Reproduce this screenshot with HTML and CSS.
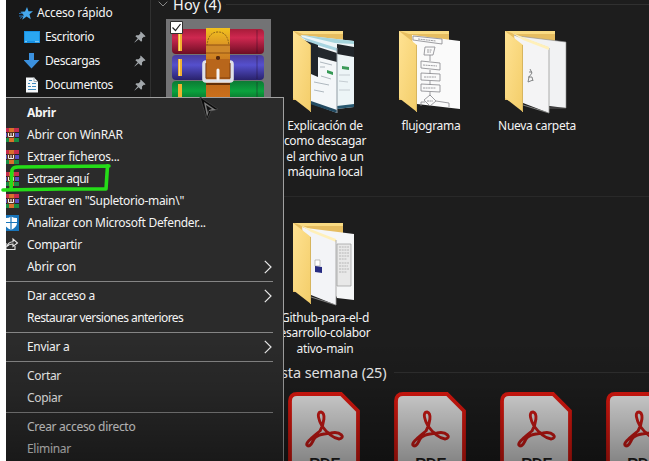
FILE: index.html
```
<!DOCTYPE html>
<html lang="es">
<head>
<meta charset="utf-8">
<title>Explorador de archivos</title>
<link rel="stylesheet" href="styles.css">
</head>
<body>
<svg class="defs" aria-hidden="true">
  <linearGradient id="fold" x1="0" x2="1" y2="1"><stop offset="0" stop-color="#ffe292"/><stop offset="1" stop-color="#f3cd69"/></linearGradient>
  <linearGradient id="red" x2="0" y2="1"><stop offset="0" stop-color="#a81c3a"/><stop offset=".35" stop-color="#cf2850"/><stop offset="1" stop-color="#6d0d24"/></linearGradient>
  <linearGradient id="blue" x2="0" y2="1"><stop offset="0" stop-color="#4a3b9c"/><stop offset=".4" stop-color="#5550cd"/><stop offset="1" stop-color="#29226c"/></linearGradient>
  <linearGradient id="green" x2="0" y2="1"><stop offset="0" stop-color="#0c7a34"/><stop offset=".4" stop-color="#0ba33e"/><stop offset="1" stop-color="#07501f"/></linearGradient>
  <linearGradient id="belt" x2="0" y2="1"><stop offset="0" stop-color="#f2c21e"/><stop offset=".25" stop-color="#d98f25"/><stop offset=".6" stop-color="#b9651a"/><stop offset="1" stop-color="#d3741c"/></linearGradient>
  <symbol id="pin" viewBox="0 0 12 12"><path d="M6.700.400 11.600 5.300l-1.200.6-.6-.2-1.800 1.900.1 2.200-1 .9L4.600 8.300.7 11.500l-.3-.3L3.700 7.300 1.400 5.200l.9-1 2.300.1L6.400 2.500 6.200 1.500z" fill="#a2a7ab"/></symbol>
  <symbol id="rar" viewBox="0 0 13 14"><path fill="#c52c4c" d="M0 0h13v4H0z"/><path fill="#554fc0" d="M0 5h13v4H0z"/><path fill="#188c42" d="M0 10h13v4H0z"/><path fill="#222" d="M0 4h13v1H0zM0 9h13v1H0z"/><path fill="#d9702b" d="M3 0h5v14H3z"/><path fill="#5b3421" d="M1 4h8v6H1z"/><path d="M2.500 5v3.500h5V5M5 5v3.500" fill="none" stroke="#f3eeee"/></symbol>
  <symbol id="chev" viewBox="0 0 8 14"><path d="M.8.8 7 7 .8 13.200" fill="none" stroke="#e8e8e8" stroke-width="1.200"/></symbol>
  <symbol id="pdf" viewBox="0 0 72 100"><path d="M9 2H53L70 19V98H2V9Q2 2 9 2Z" fill="#e6e6e6" stroke="#e0180f" stroke-width="3.800"/><path d="M20 54C15 52 26 44 32 39 36 32 38 21 33 20 28 20 31 29 34 34 39 41 45 46 51 47 58 46 53 39 43 41 34 42 27 43 25 49 23 53 21 55 19 53" fill="none" stroke="#d11a16" stroke-width="2.900" stroke-linecap="round" stroke-linejoin="round"/></symbol>
  <symbol id="back" viewBox="0 0 62 84"><path d="M0 1H50V70H0z" fill="#e6bd60"/><path d="M1 1H50V4H10z" fill="#f9db83"/></symbol>
  <symbol id="front" viewBox="0 0 62 84"><path d="M0 1 18 15V82L0 68z" fill="url(#fold)"/><path d="M17.500 15V82" stroke="#d7b55e"/></symbol>
</svg>

<div class="window">
  <nav class="side">
    <div class="quick"><svg width="14" height="13" viewBox="0 0 14 13"><path d="M8 0 9.500 4.300 14 4.300 10.500 7.200 11.800 12.300 7.600 9.500 3.200 12.800 4.600 7.900 1.500 4.800 6 4.500z" fill="#46a9ee"/><path d="M0 6.500 4 6M0 9h4M1 11.500 4 9" stroke="#2876ba"/></svg><span>Acceso rápido</span></div>
    <div class="place"><svg width="16" height="12" viewBox="0 0 16 12"><path d="M0 0h16v12H0z" fill="#1690e4"/><path d="M1 1h14v9H1z" fill="#2aa6f1"/><path d="M1 10.700h14" stroke="#92d2f5" stroke-dasharray="2 8 4"/></svg><span>Escritorio</span><svg class="pin"><use href="#pin"/></svg></div>
    <div class="place"><svg width="16" height="16" viewBox="0 0 16 16"><path d="M5 0h5v7h5.500L7.500 15.500-.5 7H5z" fill="#3b91df"/></svg><span>Descargas</span><svg class="pin"><use href="#pin"/></svg></div>
    <div class="place"><svg width="16" height="16" viewBox="0 0 16 16"><path d="M2 .5h8l4 4v11H2z" fill="#f5f8fa"/><path d="M10 .5v4h4" fill="none" stroke="#a5adb4"/><path d="M4 6.500h2M8 6.500h4M4 9.500h3M8 9.500h4M4 12.500h8M5 3.500h3" stroke="#3f8bc0" stroke-width="1.200"/></svg><span>Documentos</span><svg class="pin"><use href="#pin"/></svg></div>
  </nav>
  <main class="files">
    <h2 class="group today"><svg width="10" height="6" viewBox="0 0 10 6"><path d="m.7.700 4.300 4.300L9.300.7" fill="none" stroke="#888"/></svg><span>Hoy (4)</span></h2>
    <div class="grid first">
      <div class="file selected">
        <svg class="archive" width="92" height="92" viewBox="0 0 92 92">
          <rect x="0" y="2" width="92" height="25" rx="4" fill="url(#red)"/><rect x="0" y="28" width="92" height="25" rx="4" fill="url(#blue)"/><rect x="0" y="54" width="92" height="25" rx="4" fill="url(#green)"/>
          <path d="M6 6h4v18H6zM6 32h4v17H6zM6 57h4v18H6z" fill="#f0b232"/><path d="M7 6h1v18H7zM7 32h1v17H7z" fill="#ffe27a"/>
          <path d="M85 3v23M85 29v23M85 55v23" stroke="#200a25" opacity=".4"/>
          <path d="M34 1h24v78H34z" fill="url(#belt)"/><path d="M35 19Q36 5 46 5T57 19" fill="none" stroke="#8e6216" stroke-dasharray="2 1"/><path d="M34 18h24v8H34z" fill="#cf882a"/><path d="M34 18h24M34 26h24" stroke="#905012"/>
          <circle cx="46" cy="31" r="2" fill="#54270e"/><rect x="32" y="35" width="28" height="19" rx="2" fill="none" stroke="#dfe1e8" stroke-width="3.600"/><path d="M34 32h24v19H34z" fill="#b8661b"/><circle cx="46" cy="31" r="2" fill="#54270e"/><path d="M34 36V51h24V36" fill="none" stroke="#82410f"/><path d="M46 43v9" stroke="#f4f4f6" stroke-width="3" stroke-linecap="round"/><path d="M34 57h24" stroke="#643009" stroke-width="2"/>
        </svg>
        <svg class="check" width="13" height="13" viewBox="0 0 13 13"><path d="M.5.500h12v12H.5z" fill="#fff" stroke="#303030"/><path d="m2.500 6.500 3 3 5-6.500" fill="none" stroke="#222" stroke-width="1.200"/></svg>
      </div>
      <div class="file">
        <svg class="folder" viewBox="0 0 62 84"><use href="#back"/><path d="M8 5 61 11V77L44 79z" fill="#edf5f7"/><path d="M8 5 61 11V14L42 13z" fill="#a5d5dd"/><path d="M44 14 61 17V27L44 24z" fill="#202529"/><path d="M49 36l7 1v3l-7-1z" fill="#3c9b5a"/><path d="M46 45h11M46 51l9 1M46 60h11" stroke="#c5cdd2"/><path d="M44 76 61 74V77L44 79z" fill="#285870"/><path d="M6 6 44 18V83L17 73z" fill="#f4f7f9"/><path d="M6 6 44 18V21L20 14z" fill="#a7d4e0"/><path d="M8 9 25 15V47L18 44V17z" fill="#20252b"/><path d="M25 17 44 23V32L25 27z" fill="#23282d"/><path d="M34 40l6 2v3l-6-2z" fill="#359955"/><path d="M27 32l12 3M27 37h5M28 46l10 3M21 52l15 3M21 60l10 2" stroke="#afb8bf"/><path d="M18 71 44 80V83L17 74z" fill="#234b62"/><path d="M44 18v65" stroke="#909ba3"/><use href="#front"/></svg>
        <span class="name">Explicación de<br>como descagar<br>el archivo a un<br>máquina local</span>
      </div>
      <div class="file">
        <svg class="folder" viewBox="0 0 62 84"><use href="#back"/><path d="M13 5 61 11V79L18 74z" fill="#fafafa"/><g fill="none" stroke="#85858a" stroke-width=".8"><path d="M14 6l29 3v5L14 10zM26 17h10l-2 8h-9zM22 31l19 2v7l-19-2zM22 43l19 1v7l-19-1zM22 54l19 1v7l-19-1zM31 65l6 6-6 5-6-6zM31 25v6M31 40v4M31 51v4M31 62v4M37 71l13 2v4M22 76v-4h4"/><path d="M19 9l18 2M28 20h5M28 22h4M24 35l14 1M25 47h12M24 58h13M28 71h6" stroke-dasharray="2 .6"/></g><use href="#front"/></svg>
        <span class="name">flujograma</span>
      </div>
      <div class="file">
        <svg class="folder" viewBox="0 0 62 84"><use href="#back"/><path d="M13 6 61 12V78L44 76z" fill="#f1f2f3"/><path d="M13 6 61 12V78H44" fill="none" stroke="#8a8c8c" stroke-width=".6"/><path d="M9 5 44 18V83L18 73z" fill="#f4f4f5"/><path d="M9 5 44 18V83L18 75" fill="none" stroke="#999b98" stroke-width=".8"/><path d="m7 3 37 14v3L18 10z" fill="#fff0b9"/><path d="m25 39 2 4-3 4-1 5 5-2M23 47h4l1 4M24 42h3" fill="none" stroke="#77797a" stroke-width=".9"/><use href="#front"/></svg>
        <span class="name">Nueva carpeta</span>
      </div>
      <div class="rule"></div>
      <div class="file second">
        <svg class="folder" viewBox="0 0 62 84"><use href="#back"/><path d="M13 6 61 12V78L44 76z" fill="#f5f6f7"/><path d="M44 22h14v42H44z" fill="#e8e8e8" stroke="#999" stroke-width=".7"/><path d="M46 25h10M46 28h10M46 31h10M46 34h10M46 37h8M46 41h10M46 44h9M46 47h10M46 50h8" stroke="#aaa" stroke-width=".8" stroke-dasharray="2 .7"/><path d="M9 5 43 18V83L18 73z" fill="#f3f4f7"/><path d="m7 3 36 14v3L18 10z" fill="#fff0b9"/><path d="M43 18v65L18 75" fill="none" stroke="#999" stroke-width=".8"/><path d="M22 38h5v6h-5z" fill="#fff" stroke="#999" stroke-width=".6"/><path d="m22 44 7 1v6l-7-1z" fill="#262b82"/><use href="#front"/></svg>
        <span class="name">Github-para-el-d<br>esarrollo-colabor<br>ativo-main</span>
      </div>
    </div>
    <h2 class="group week"><span>Esta semana (25)</span></h2>
    <div class="grid docs">
      <div class="doc"><svg><use href="#pdf"/></svg><b>PDF</b></div>
      <div class="doc"><svg><use href="#pdf"/></svg><b>PDF</b></div>
      <div class="doc"><svg><use href="#pdf"/></svg><b>PDF</b></div>
      <div class="doc"><svg><use href="#pdf"/></svg><b>PDF</b></div>
    </div>
  </main>

  <div class="menu" role="menu">
    <div class="item bold"><i></i><span>Abrir</span></div>
    <div class="item wide"><i><svg class="rar"><use href="#rar"/></svg></i><span>Abrir con WinRAR</span></div>
    <div class="item"><i><svg class="rar"><use href="#rar"/></svg></i><span>Extraer ficheros...</span></div>
    <div class="item tight"><i><svg class="rar"><use href="#rar"/></svg></i><span>Extraer aquí</span></div>
    <div class="item"><i><svg class="rar"><use href="#rar"/></svg></i><span>Extraer en "Supletorio-main\"</span></div>
    <div class="item"><i><svg width="13" height="16" viewBox="0 0 13 16"><path fill="#1875bb" d="M0 0h13v16H0z"/><path fill="#fff" d="M0 3q3 0 5-1.500Q8 3 11 3v5q0 4-6 7-3-1.500-5-3.500z"/><path d="M5 1v14M0 7.500h11" stroke="#1875bb" stroke-width="1.200"/></svg></i><span>Analizar con Microsoft Defender...</span></div>
    <div class="item"><i><svg width="13" height="16" viewBox="0 0 13 16"><path d="M0 6v6.500h9V9M1 9.500Q2 5 7 4.800V2l4.500 4L7 9.500V7Q3 7 1 9.500z" fill="none" stroke="#e6e6e6" stroke-width="1.100"/></svg></i><span>Compartir</span></div>
    <div class="item"><i></i><span>Abrir con</span><svg class="chev"><use href="#chev"/></svg></div>
    <hr>
    <div class="item"><i></i><span>Dar acceso a</span><svg class="chev"><use href="#chev"/></svg></div>
    <div class="item tight"><i></i><span>Restaurar versiones anteriores</span></div>
    <hr>
    <div class="item"><i></i><span>Enviar a</span><svg class="chev"><use href="#chev"/></svg></div>
    <hr>
    <div class="item"><i></i><span>Cortar</span></div>
    <div class="item"><i></i><span>Copiar</span></div>
    <hr>
    <div class="item"><i></i><span>Crear acceso directo</span></div>
    <div class="item"><i></i><span>Eliminar</span></div>
  </div>
  <div class="shade"></div>
</div>
<svg class="mark" width="112" height="34" viewBox="0 0 112 34"><path d="M11 28 12 9Q13 6 18 6L109 5M107.500 5 106 28 60 28 3 29" fill="none" stroke="#25dc18" stroke-width="3.600" stroke-linecap="round" stroke-linejoin="round"/></svg>
<svg class="cursor" width="22" height="26" viewBox="0 0 22 26"><path d="M1 0 19 12 12 14 8 23z" fill="#0b0b0b" stroke="#3c3c3c"/><path d="m5 5 12 8-7 1-2 6z" fill="#7a7a7a"/><path d="m7 8 6 4-3 1-1 3z" fill="#111"/></svg>
</body>
</html>
```
FILE: styles.css
```
* { box-sizing: border-box; }
body { margin: 0; width: 649px; height: 461px; overflow: hidden; position: relative; background: #fff; color: #f4f4f4; font: 12px/15.3px "Noto Sans", "Open Sans", sans-serif; letter-spacing: -.3px; }
svg { display: block; flex: none; }
.defs { position: absolute; width: 0; height: 0; }
.window { position: relative; margin-left: 6px; height: 461px; display: grid; grid-template-columns: 145px 1fr; background: #1d1d1d; overflow: hidden; }
.side { background: #181818; border-right: 1px solid #303030; padding-top: 1px; }
.quick, .place { display: flex; align-items: center; height: 24px; }
.quick { padding-left: 13px; gap: 4px; letter-spacing: -.25px; }
.place { padding: 0 4px 0 18px; }
.place span { margin-left: 5px; letter-spacing: -.4px; }
.pin { width: 12px; height: 12px; margin-left: auto; }
.files { overflow: hidden; }
.group { margin: 0; display: flex; align-items: center; gap: 7px; font-size: 14.5px; font-weight: 400; line-height: 20px; letter-spacing: -.1px; white-space: nowrap; }
.group::after { content: ""; flex: 1; height: 1px; background: #303030; }
.today { height: 20px; padding-left: 7px; margin-top: -6px; gap: 5px; letter-spacing: .15px; }
.grid { display: grid; grid-template-columns: repeat(5, 106px); padding-left: 15px; width: 600px; }
.first { grid-template-rows: 177px 172px; margin-top: 5px; }
.file { position: relative; display: flex; flex-direction: column; align-items: center; padding-top: 11px; width: 106px; text-align: center; white-space: nowrap; }
.selected { background: #737375; width: 105px; height: 100px; padding: 8px 1px 0 0; }
.check { position: absolute; left: 4px; top: 2px; }
.folder { width: 62px; height: 84px; margin-right: 2px; }
.name { margin-top: 4px; }
.rule { grid-column: 1 / -1; grid-row: 2; height: 1px; background: #292929; }
.second { grid-column: 2; grid-row: 2; padding-top: 26px; }
.week { padding-left: 122px; margin-top: -6px; }
.docs { padding-top: 10px; }
.doc { position: relative; display: flex; justify-content: center; padding-right: 2px; }
.doc:first-child { grid-column: 2; }
.doc svg { width: 72px; height: 100px; }
.doc b { position: absolute; top: 60px; font: 500 18px/26px Roboto, sans-serif; letter-spacing: -1px; color: #222; }
.menu { position: absolute; left: 0; top: 97px; width: 278px; height: 370px; padding-top: 4px; background: #2b2b2b; border: solid #a0a0a0; border-width: 1px 1px 0 0; }
.item { display: flex; align-items: center; height: 22px; padding-right: 11px; white-space: nowrap; }
.item i { width: 21px; flex: none; }
.bold { font-weight: 700; }
.wide { letter-spacing: -.2px; }
.tight { letter-spacing: -.55px; }
.rar { width: 13px; height: 14px; }
.chev { width: 8px; height: 14px; margin-left: auto; }
.menu hr { margin: 3px 10px 3px 0; border: 0; height: 1px; background: #858585; }
.shade { position: absolute; inset: 340px 0 0; background: linear-gradient(transparent, rgba(0,0,0,.12) 40%, rgba(0,0,0,.42)); }
.mark { position: absolute; left: 0; top: 161px; }
.cursor { position: absolute; left: 199px; top: 97px; }
```
